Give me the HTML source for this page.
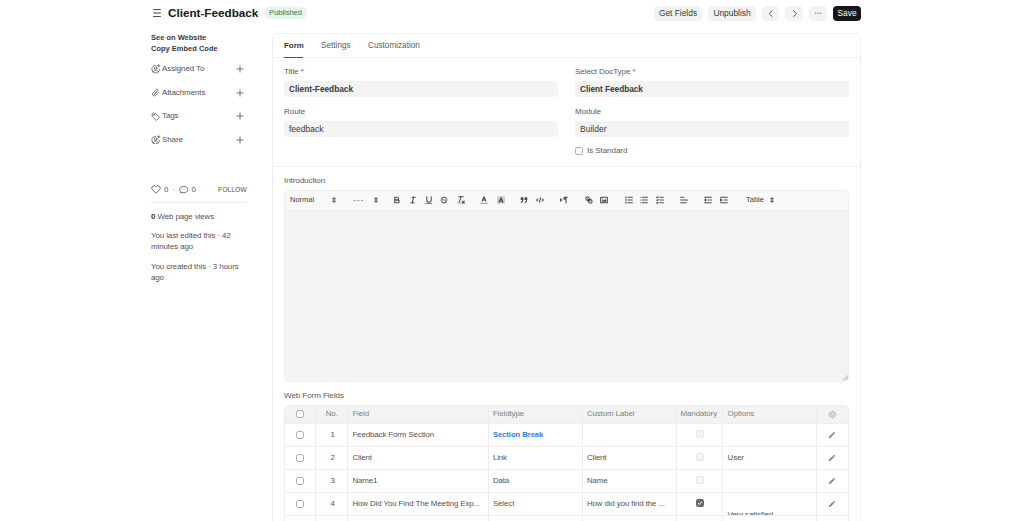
<!DOCTYPE html>
<html><head><meta charset="utf-8">
<style>
*{box-sizing:border-box;margin:0;padding:0}
html,body{width:1024px;height:521px;overflow:hidden;background:#fff}
body{font-family:"Liberation Sans",sans-serif;color:#383838;position:relative;font-size:7.7px}
.a{position:absolute;white-space:nowrap;line-height:1}
.btn{position:absolute;background:#f3f3f3;border-radius:4px;height:15px;top:6px;color:#383838;font-size:8.4px;line-height:15px;text-align:center}
.card{position:absolute;left:272px;top:33px;width:589px;height:500px;border:1px solid #efefef;border-radius:5px;background:#fff}
.lbl{position:absolute;color:#5a5a5a;font-size:8.1px;letter-spacing:-0.1px;line-height:1;white-space:nowrap;margin-top:-0.4px}
.req{color:#e03636}
.inp{position:absolute;background:#f3f3f3;border-radius:4px;height:16px;color:#383838;font-size:8.5px;line-height:16px;padding-left:5px;white-space:nowrap}
.hline{position:absolute;height:1px;background:#ededed}
.vline{position:absolute;width:1px;background:#ededed}
.cb{position:absolute;width:8px;height:8px;border:1px solid #a8a8a8;border-radius:2.5px;background:#fff}
.td{position:absolute;font-size:7.9px;letter-spacing:-0.1px;color:#525252;white-space:nowrap;line-height:1;margin-top:-0.4px}
.qi{position:absolute;top:195.2px}
.st{fill:none;stroke:#4a4a4a;stroke-width:1.9;stroke-linecap:round;stroke-linejoin:round}
.thin{stroke-width:1}
.fl{fill:#4a4a4a}
</style></head><body>

<!-- header -->
<svg class="a" style="left:148px;top:4px" width="20" height="18" viewBox="0 0 20 18" stroke="#4a4a4a" stroke-width="1"><path d="M5.2 5.5H12.8M5.2 9H12.8M5.2 12.5H12.8"/></svg>
<div class="a" style="left:168px;top:7px;font-size:11.7px;font-weight:bold;color:#171717">Client-Feedback</div>
<div class="a" style="left:264px;top:7px;width:43px;height:12px;border-radius:6px;background:#e4f5e9;color:#2b7d52;font-size:7.7px;letter-spacing:-0.1px;line-height:12px;text-align:center">Published</div>

<div class="btn" style="left:654px;width:48px">Get Fields</div>
<div class="btn" style="left:708px;width:48px">Unpublish</div>
<div class="btn" style="left:762px;width:17px"></div>
<div class="btn" style="left:785px;width:18px"></div>
<div class="btn" style="left:809px;width:18px"></div>
<svg class="a" style="left:767px;top:9px" width="8" height="9" viewBox="0 0 8 9" fill="none" stroke="#5a5a5a" stroke-width="1" stroke-linecap="round" stroke-linejoin="round"><path d="M5.2 1.7L2.2 4.6L5.2 7.5"/></svg>
<svg class="a" style="left:791px;top:9px" width="8" height="9" viewBox="0 0 8 9" fill="none" stroke="#5a5a5a" stroke-width="1" stroke-linecap="round" stroke-linejoin="round"><path d="M2.6 1.7L5.6 4.6L2.6 7.5"/></svg>
<svg class="a" style="left:814px;top:11px" width="8" height="4" viewBox="0 0 8 4" fill="#666"><circle cx="1.6" cy="2.2" r="0.65"/><circle cx="4" cy="2.2" r="0.65"/><circle cx="6.4" cy="2.2" r="0.65"/></svg>
<div class="btn" style="left:833px;width:28px;background:#171717;color:#fff">Save</div>

<!-- sidebar -->
<div class="a" style="left:151px;top:34px;font-size:7.5px;font-weight:bold;color:#383838">See on Website</div>
<div class="a" style="left:151px;top:45px;font-size:7.5px;font-weight:bold;color:#383838">Copy Embed Code</div>

<div class="a" style="left:162px;top:64.6px;font-size:8px;letter-spacing:-0.1px;color:#525252">Assigned To</div>
<div class="a" style="left:162px;top:88.6px;font-size:8px;letter-spacing:-0.1px;color:#525252">Attachments</div>
<div class="a" style="left:162px;top:112px;font-size:8px;letter-spacing:-0.1px;color:#525252">Tags</div>
<div class="a" style="left:162px;top:135.6px;font-size:8px;letter-spacing:-0.1px;color:#525252">Share</div>


<svg class="a" style="left:151px;top:64px" width="9.5" height="9.5" viewBox="0 0 16 16" fill="none" stroke="#505050" stroke-width="1.25" stroke-linecap="round"><path d="M14.2 8.8A6.4 6.4 0 1 1 7.6 2.3"/><circle cx="7.9" cy="6.9" r="2.2"/><path d="M3.6 13.2C4.6 11.4 6.1 10.4 7.9 10.4S11.2 11.4 12.2 13.2"/><path d="M13 1.2v3.6M11.2 3h3.6"/></svg>
<svg class="a" style="left:151px;top:87.5px" width="9.5" height="9.5" viewBox="0 0 16 16" fill="none" stroke="#505050" stroke-width="1.25" stroke-linecap="round"><path d="M6.2 9.8L11.3 4.7A1.6 1.6 0 0 0 9 2.4L3.3 8.1A3 3 0 0 0 7.6 12.4L13.4 6.6"/><path d="M5 11L10 6"/></svg>
<svg class="a" style="left:151px;top:112px" width="9.5" height="9.5" viewBox="0 0 16 16" fill="none" stroke="#505050" stroke-width="1.25" stroke-linejoin="round"><path d="M2 3.2A1.2 1.2 0 0 1 3.2 2H7.3L14.3 9L9 14.3L2 7.3Z"/><circle cx="5.2" cy="5.2" r="1"/></svg>
<svg class="a" style="left:151px;top:134.5px" width="9.5" height="9.5" viewBox="0 0 16 16" fill="none" stroke="#505050" stroke-width="1.25" stroke-linecap="round"><path d="M14.2 8.8A6.4 6.4 0 1 1 7.6 2.3"/><circle cx="7.9" cy="6.9" r="2.2"/><path d="M3.6 13.2C4.6 11.4 6.1 10.4 7.9 10.4S11.2 11.4 12.2 13.2"/><path d="M13 1.2v3.6M11.2 3h3.6"/></svg>
<svg class="a" style="left:236px;top:65px" width="8" height="8" viewBox="0 0 8 8" stroke="#525252" stroke-width="0.8"><path d="M4 0.5V7.5M0.5 4H7.5"/></svg>
<svg class="a" style="left:236px;top:88.5px" width="8" height="8" viewBox="0 0 8 8" stroke="#525252" stroke-width="0.8"><path d="M4 0.5V7.5M0.5 4H7.5"/></svg>
<svg class="a" style="left:236px;top:112px" width="8" height="8" viewBox="0 0 8 8" stroke="#525252" stroke-width="0.8"><path d="M4 0.5V7.5M0.5 4H7.5"/></svg>
<svg class="a" style="left:236px;top:135.5px" width="8" height="8" viewBox="0 0 8 8" stroke="#525252" stroke-width="0.8"><path d="M4 0.5V7.5M0.5 4H7.5"/></svg>

<svg class="a" style="left:151px;top:185px" width="10" height="9" viewBox="0 0 20 18" fill="none" stroke="#4a4a4a" stroke-width="1.6" stroke-linejoin="round"><path d="M10 16.5L2.6 9.3A4.4 4.4 0 0 1 10 3.3A4.4 4.4 0 0 1 17.4 9.3Z"/></svg>
<div class="a" style="left:164px;top:186px;font-size:8px;color:#525252">0</div>
<div class="a" style="left:172.5px;top:186px;font-size:8px;color:#666">·</div>
<svg class="a" style="left:178.5px;top:184.8px" width="9.5" height="9" viewBox="0 0 20 18" fill="none" stroke="#4a4a4a" stroke-width="1.6" stroke-linejoin="round"><path d="M4.5 14.5C2.5 13.3 1.5 11.3 1.5 9.2C1.5 5.3 5.3 2.5 10 2.5S18.5 5.3 18.5 9.2S14.7 15.8 10 15.8C8.8 15.8 7.6 15.6 6.5 15.2L3.8 16.8Z"/></svg>
<div class="a" style="left:191.5px;top:186px;font-size:8px;color:#525252">0</div>
<div class="a" style="left:218px;top:186.5px;font-size:6.8px;color:#525252">FOLLOW</div>
<div class="hline" style="left:151px;top:202px;width:96px"></div>
<div class="a" style="left:151px;top:212.6px;font-size:7.9px;letter-spacing:-0.08px;color:#525252"><b style="color:#383838">0</b> Web page views</div>
<div class="a" style="left:151px;top:230.3px;font-size:7.9px;letter-spacing:-0.08px;color:#525252;line-height:11px;white-space:normal;width:96px">You last edited this · 42 minutes ago</div>
<div class="a" style="left:151px;top:260.8px;font-size:7.9px;letter-spacing:-0.08px;color:#525252;line-height:11px;white-space:normal;width:96px">You created this · 3 hours ago</div>

<!-- card -->
<div class="card"></div>
<div class="a" style="left:284px;top:42px;font-size:7.9px;font-weight:bold;color:#383838">Form</div>
<div class="a" style="left:321px;top:42px;font-size:8.2px;color:#5c5c5c">Settings</div>
<div class="a" style="left:368px;top:42px;font-size:8.2px;color:#5c5c5c">Customization</div>
<div class="hline" style="left:273px;top:57px;width:587px;background:#efefef"></div>
<div class="a" style="left:284px;top:57px;width:19px;height:1px;background:#505050"></div>

<div class="lbl" style="left:284px;top:68px">Title <span class="req">*</span></div>
<div class="inp" style="left:284px;top:81px;width:274px;font-weight:bold;font-size:8.3px">Client-Feedback</div>
<div class="lbl" style="left:284px;top:108px">Route</div>
<div class="inp" style="left:284px;top:121px;width:274px">feedback</div>

<div class="lbl" style="left:575px;top:68px">Select DocType <span class="req">*</span></div>
<div class="inp" style="left:575px;top:81px;width:274px;font-weight:bold;font-size:8.3px;letter-spacing:-0.05px">Client Feedback</div>
<div class="lbl" style="left:575px;top:108px">Module</div>
<div class="inp" style="left:575px;top:121px;width:274px">Builder</div>
<div class="cb" style="left:575px;top:147px"></div>
<div class="lbl" style="left:587px;top:147px">Is Standard</div>

<div class="hline" style="left:273px;top:166px;width:587px;background:#efefef"></div>
<div class="lbl" style="left:284px;top:177px">Introduction</div>
<div class="a" style="left:284px;top:190px;width:565px;height:192px;border:1px solid #efefef;border-radius:5px;background:#f3f3f3;overflow:hidden">
  <div style="position:absolute;left:0;top:0;width:100%;height:20px;background:#f8f8f8;border-bottom:1px solid #ededed"></div>
</div>
<svg width="0" height="0" style="position:absolute">
<defs>
<symbol id="q-bold" viewBox="0 0 18 18"><path class="st" d="M5,4H9.5A2.5,2.5,0,0,1,12,6.5v0A2.5,2.5,0,0,1,9.5,9H5A0,0,0,0,1,5,9V4A0,0,0,0,1,5,4Z"/><path class="st" d="M5,9h5.5A2.5,2.5,0,0,1,13,11.5v0A2.5,2.5,0,0,1,10.5,14H5a0,0,0,0,1,0,0V9A0,0,0,0,1,5,9Z"/></symbol>
<symbol id="q-italic" viewBox="0 0 18 18"><line class="st" x1="7" x2="13" y1="4" y2="4"/><line class="st" x1="5" x2="11" y1="14" y2="14"/><line class="st" x1="8" x2="10" y1="14" y2="4"/></symbol>
<symbol id="q-underline" viewBox="0 0 18 18"><path class="st" d="M5,3V9a4.012,4.012,0,0,0,4,4H9a4.012,4.012,0,0,0,4-4V3"/><rect class="fl" height="1" rx="0.5" ry="0.5" width="12" x="3" y="15"/></symbol>
<symbol id="q-strike" viewBox="0 0 18 18"><line class="st thin" x1="15.5" x2="2.5" y1="8.5" y2="9.5"/><path class="fl" d="M9.007,8C6.542,7.791,6,7.519,6,6.5,6,5.792,7.283,5,9,5c1.571,0,2.765.679,2.969,1.309a1,1,0,0,0,1.9-.617C13.356,4.106,11.354,3,9,3,6.2,3,4,4.538,4,6.5a3.2,3.2,0,0,0,.5,1.843Z"/><path class="fl" d="M8.984,10C11.457,10.208,12,10.479,12,11.5c0,0.708-1.283,1.5-3,1.5-1.571,0-2.765-.679-2.969-1.309a1,1,0,1,0-1.9.617C4.644,13.894,6.646,15,9,15c2.8,0,5-1.538,5-3.5a3.2,3.2,0,0,0-.5-1.843Z"/></symbol>
<symbol id="q-clean" viewBox="0 0 18 18"><line class="st" x1="5" x2="13" y1="3" y2="3"/><line class="st" x1="6" x2="9.35" y1="12" y2="3"/><line class="st" x1="11" x2="15" y1="11" y2="15"/><line class="st" x1="15" x2="11" y1="11" y2="15"/><rect class="fl" height="1" rx="0.5" ry="0.5" width="7" x="2" y="14"/></symbol>
<symbol id="q-color" viewBox="0 0 18 18"><line class="st" style="stroke:#9a9a9a" x1="3" x2="15" y1="15" y2="15"/><polyline class="st" points="5.5 11 9 3 12.5 11"/><line class="st" x1="11.63" x2="6.38" y1="9" y2="9"/></symbol>
<symbol id="q-bg" viewBox="0 0 18 18"><rect x="2" y="2" width="14" height="14" fill="#cfcfcf"/><polyline class="st" points="5.5 13 9 5 12.5 13"/><line class="st" x1="11.63" x2="6.38" y1="11" y2="11"/></symbol>
<symbol id="q-quote" viewBox="0 0 18 18"><rect class="fl st" height="3" width="3" x="4" y="5"/><rect class="fl st" height="3" width="3" x="11" y="5"/><path class="fl st" d="M7,8c0,4.031-3,5-3,5"/><path class="fl st" d="M14,8c0,4.031-3,5-3,5"/></symbol>
<symbol id="q-code" viewBox="0 0 18 18"><polyline class="st" points="5 7 3 9 5 11"/><polyline class="st" points="13 7 15 9 13 11"/><line class="st" x1="10" x2="8" y1="5" y2="13"/></symbol>
<symbol id="q-dir" viewBox="0 0 18 18"><polygon class="st fl" points="3 11 5 9 3 7 3 11"/><line class="st fl" x1="15" x2="11" y1="4" y2="4"/><path class="fl" d="M11,3a3,3,0,0,0,0,6h1V3H11Z"/><rect class="fl" height="11" width="1" x="11" y="4"/><rect class="fl" height="11" width="1" x="13" y="4"/></symbol>
<symbol id="q-link" viewBox="0 0 18 18"><line class="st" x1="7" x2="11" y1="7" y2="11"/><path class="st" d="M8.9,4.577a3.476,3.476,0,0,1,.36,4.679A3.476,3.476,0,0,1,4.577,8.9C3.185,7.5,2.035,6.4,4.217,4.217S7.5,3.185,8.9,4.577Z"/><path class="st" d="M13.423,9.1a3.476,3.476,0,0,0-4.679-.36,3.476,3.476,0,0,0,.36,4.679c1.392,1.392,2.5,2.542,4.679.36S14.815,10.5,13.423,9.1Z"/></symbol>
<symbol id="q-image" viewBox="0 0 18 18"><rect class="st" height="10" width="12" x="3" y="4"/><circle class="fl" cx="6" cy="7" r="1"/><polyline class="fl" points="5 12 5 11 7 9 8 10 11 7 13 9 13 12 5 12"/></symbol>
<symbol id="q-ol" viewBox="0 0 18 18"><line class="st" x1="7" x2="15" y1="4" y2="4"/><line class="st" x1="7" x2="15" y1="9" y2="9"/><line class="st" x1="7" x2="15" y1="14" y2="14"/><line class="st thin" x1="2.5" x2="4.5" y1="5.5" y2="5.5"/><path class="fl" d="M3.5,6A0.5,0.5,0,0,1,3,5.5V3.085l-0.276.138A0.5,0.5,0,0,1,2.053,3c-0.124-.247-0.023-0.324.224-0.447l1-.5A0.5,0.5,0,0,1,4,2.5v3A0.5,0.5,0,0,1,3.5,6Z"/><path class="st thin" d="M4.5,10.5h-2c0-.234,1.85-1.076,1.85-2.234A0.959,0.959,0,0,0,2.5,8.156"/><path class="st thin" d="M2.5,14.846a0.959,0.959,0,0,0,1.850-.109A0.7,0.7,0,0,0,3.75,14a0.688,0.688,0,0,0,.6-0.736,0.959,0.959,0,0,0-1.85-.109"/></symbol>
<symbol id="q-ul" viewBox="0 0 18 18"><line class="st" x1="6" x2="15" y1="4" y2="4"/><line class="st" x1="6" x2="15" y1="9" y2="9"/><line class="st" x1="6" x2="15" y1="14" y2="14"/><line class="st" x1="3" x2="3" y1="4" y2="4"/><line class="st" x1="3" x2="3" y1="9" y2="9"/><line class="st" x1="3" x2="3" y1="14" y2="14"/></symbol>
<symbol id="q-check" viewBox="0 0 18 18"><line class="st" x1="9" x2="15" y1="4" y2="4"/><polyline class="st" points="3 4 4 5 6 3"/><line class="st" x1="9" x2="15" y1="14" y2="14"/><polyline class="st" points="3 14 4 15 6 13"/><line class="st" x1="9" x2="15" y1="9" y2="9"/><polyline class="st" points="3 9 4 10 6 8"/></symbol>
<symbol id="q-align" viewBox="0 0 18 18"><line class="st" x1="3" x2="15" y1="9" y2="9"/><line class="st" x1="3" x2="13" y1="14" y2="14"/><line class="st" x1="3" x2="9" y1="4" y2="4"/></symbol>
<symbol id="q-outdent" viewBox="0 0 18 18"><line class="st" x1="3" x2="15" y1="14" y2="14"/><line class="st" x1="3" x2="15" y1="4" y2="4"/><line class="st" x1="9" x2="15" y1="9" y2="9"/><polyline class="st" points="5 7 5 11 3 9 5 7"/></symbol>
<symbol id="q-indent" viewBox="0 0 18 18"><line class="st" x1="3" x2="15" y1="14" y2="14"/><line class="st" x1="3" x2="15" y1="4" y2="4"/><line class="st" x1="9" x2="15" y1="9" y2="9"/><polyline class="fl st" points="3 7 3 11 5 9 3 7"/></symbol>
<symbol id="q-arrows" viewBox="0 0 18 18"><polygon class="st fl" points="7 11 9 13 11 11 7 11"/><polygon class="st fl" points="7 7 9 5 11 7 7 7"/></symbol>
</defs></svg>
<svg class="qi" style="left:392px" width="10" height="10"><use href="#q-bold"/></svg>
<svg class="qi" style="left:407.9px" width="10" height="10"><use href="#q-italic"/></svg>
<svg class="qi" style="left:423.7px" width="10" height="10"><use href="#q-underline"/></svg>
<svg class="qi" style="left:439.3px" width="10" height="10"><use href="#q-strike"/></svg>
<svg class="qi" style="left:455.8px" width="10" height="10"><use href="#q-clean"/></svg>
<svg class="qi" style="left:479px" width="10" height="10"><use href="#q-color"/></svg>
<svg class="qi" style="left:495.5px" width="10" height="10"><use href="#q-bg"/></svg>
<svg class="qi" style="left:519.2px" width="10" height="10"><use href="#q-quote"/></svg>
<svg class="qi" style="left:534.9px" width="10" height="10"><use href="#q-code"/></svg>
<svg class="qi" style="left:559px" width="10" height="10"><use href="#q-dir"/></svg>
<svg class="qi" style="left:583.8px" width="10" height="10"><use href="#q-link"/></svg>
<svg class="qi" style="left:599.2px" width="10" height="10"><use href="#q-image"/></svg>
<svg class="qi" style="left:623.7px" width="10" height="10"><use href="#q-ol"/></svg>
<svg class="qi" style="left:639.2px" width="10" height="10"><use href="#q-ul"/></svg>
<svg class="qi" style="left:655.1px" width="10" height="10"><use href="#q-check"/></svg>
<svg class="qi" style="left:679.3px" width="10" height="10"><use href="#q-align"/></svg>
<svg class="qi" style="left:703.1px" width="10" height="10"><use href="#q-outdent"/></svg>
<svg class="qi" style="left:719.2px" width="10" height="10"><use href="#q-indent"/></svg>
<svg class="qi" style="left:329.1px" width="10" height="10"><use href="#q-arrows"/></svg>
<svg class="qi" style="left:370.5px" width="10" height="10"><use href="#q-arrows"/></svg>
<svg class="qi" style="left:767.1px" width="10" height="10"><use href="#q-arrows"/></svg>
<div class="a" style="left:290px;top:196px;font-size:7.5px;color:#444">Normal</div>
<div class="a" style="left:353.5px;top:196px;font-size:7.5px;color:#444;letter-spacing:1.1px">---</div>
<div class="a" style="left:746px;top:196px;font-size:7.5px;color:#444">Table</div>


<svg class="a" style="left:840px;top:372px" width="10" height="10" viewBox="0 0 10 10" stroke="#8c8c8c" stroke-width="0.75" stroke-linecap="round"><path d="M3.4 7.8L7.6 3.9M6.3 7.4L7.8 6"/></svg>
<div class="lbl" style="left:284px;top:392px">Web Form Fields</div>
<div class="a" style="left:284px;top:405px;width:565px;height:130px;border:1px solid #ededed;border-radius:5px;overflow:hidden;background:#fff">
<div style="position:absolute;left:0;top:0;width:100%;height:17px;background:#f3f3f3"></div>
<div style="position:absolute;left:30px;top:0;width:1px;height:130px;background:#ededed"></div>
<div style="position:absolute;left:62px;top:0;width:1px;height:130px;background:#ededed"></div>
<div style="position:absolute;left:203px;top:0;width:1px;height:130px;background:#ededed"></div>
<div style="position:absolute;left:297px;top:0;width:1px;height:130px;background:#ededed"></div>
<div style="position:absolute;left:391px;top:0;width:1px;height:130px;background:#ededed"></div>
<div style="position:absolute;left:437px;top:0;width:1px;height:130px;background:#ededed"></div>
<div style="position:absolute;left:531px;top:0;width:1px;height:130px;background:#ededed"></div>
<div style="position:absolute;left:0;top:17px;width:100%;height:1px;background:#ededed"></div>
<div style="position:absolute;left:0;top:40px;width:100%;height:1px;background:#ededed"></div>
<div style="position:absolute;left:0;top:63px;width:100%;height:1px;background:#ededed"></div>
<div style="position:absolute;left:0;top:86px;width:100%;height:1px;background:#ededed"></div>
<div style="position:absolute;left:0;top:109px;width:100%;height:1px;background:#ededed"></div>
</div>
<div class="td" style="left:325.7px;top:410px;color:#808080">No.</div>
<div class="td" style="left:352.4px;top:410px;color:#808080">Field</div>
<div class="td" style="left:492.9px;top:410px;color:#808080">Fieldtype</div>
<div class="td" style="left:586.9px;top:410px;color:#808080">Custom Label</div>
<div class="td" style="left:680.6px;top:410px;color:#808080">Mandatory</div>
<div class="td" style="left:727.6px;top:410px;color:#808080">Options</div>
<div class="cb" style="left:296px;top:410px"></div>
<svg class="a" style="left:828px;top:410.3px" width="9" height="9" viewBox="0 0 16 16" fill="none" stroke="#9c9c9c" stroke-width="1.3"><circle cx="8" cy="8" r="5.2"/><circle cx="8" cy="8" r="2"/><path d="M8 1.2V2.8M8 13.2V14.8M1.2 8H2.8M13.2 8H14.8M3.2 3.2L4.3 4.3M11.7 11.7L12.8 12.8M3.2 12.8L4.3 11.7M11.7 4.3L12.8 3.2"/></svg>
<div class="cb" style="left:296px;top:430.5px"></div>
<div class="td" style="left:330.4px;top:431px">1</div>
<div class="td" style="left:352.4px;top:431px">Feedback Form Section</div>
<div class="td" style="left:492.9px;top:431px;color:#2b7be0;font-weight:bold;font-size:7.55px;letter-spacing:0px">Section Break</div>
<div style="position:absolute;left:695.5px;top:430px;width:8px;height:8px;border-radius:2px;border:1px solid #e6e6e6;background:#f5f5f5"></div>
<svg class="a" style="left:828px;top:431.0px" width="8" height="8" viewBox="0 0 16 16"><path d="M1.5 14.5L2.3 11L10.8 2.5Q12 1.3 13.2 2.5L13.5 2.8Q14.7 4 13.5 5.2L5 13.7Z" fill="#858585"/><path d="M9.5 3.8L12.2 6.5" stroke="#fff" stroke-width="1.1"/></svg>
<div class="cb" style="left:296px;top:453.5px"></div>
<div class="td" style="left:330.4px;top:454px">2</div>
<div class="td" style="left:352.4px;top:454px">Client</div>
<div class="td" style="left:492.9px;top:454px">Link</div>
<div class="td" style="left:586.9px;top:454px">Client</div>
<div style="position:absolute;left:695.5px;top:453px;width:8px;height:8px;border-radius:2px;border:1px solid #e6e6e6;background:#f5f5f5"></div>
<div class="td" style="left:727.6px;top:454px">User</div>
<svg class="a" style="left:828px;top:454.0px" width="8" height="8" viewBox="0 0 16 16"><path d="M1.5 14.5L2.3 11L10.8 2.5Q12 1.3 13.2 2.5L13.5 2.8Q14.7 4 13.5 5.2L5 13.7Z" fill="#858585"/><path d="M9.5 3.8L12.2 6.5" stroke="#fff" stroke-width="1.1"/></svg>
<div class="cb" style="left:296px;top:476.5px"></div>
<div class="td" style="left:330.4px;top:477px">3</div>
<div class="td" style="left:352.4px;top:477px">Name1</div>
<div class="td" style="left:492.9px;top:477px">Data</div>
<div class="td" style="left:586.9px;top:477px">Name</div>
<div style="position:absolute;left:695.5px;top:476px;width:8px;height:8px;border-radius:2px;border:1px solid #e6e6e6;background:#f5f5f5"></div>
<svg class="a" style="left:828px;top:477.0px" width="8" height="8" viewBox="0 0 16 16"><path d="M1.5 14.5L2.3 11L10.8 2.5Q12 1.3 13.2 2.5L13.5 2.8Q14.7 4 13.5 5.2L5 13.7Z" fill="#858585"/><path d="M9.5 3.8L12.2 6.5" stroke="#fff" stroke-width="1.1"/></svg>
<div class="cb" style="left:296px;top:499.5px"></div>
<div class="td" style="left:330.4px;top:500px">4</div>
<div class="td" style="left:352.4px;top:500px">How Did You Find The Meeting Exp...</div>
<div class="td" style="left:492.9px;top:500px">Select</div>
<div class="td" style="left:586.9px;top:500px">How did you find the ...</div>
<div style="position:absolute;left:695.5px;top:499px;width:8px;height:8px;border-radius:2px;background:#6b6b6b"><svg width="8" height="8" viewBox="0 0 8 8" style="position:absolute;left:0;top:0"><path d="M2 4.2L3.4 5.5L6 2.6" fill="none" stroke="#fff" stroke-width="1"/></svg></div>
<svg class="a" style="left:828px;top:500.0px" width="8" height="8" viewBox="0 0 16 16"><path d="M1.5 14.5L2.3 11L10.8 2.5Q12 1.3 13.2 2.5L13.5 2.8Q14.7 4 13.5 5.2L5 13.7Z" fill="#858585"/><path d="M9.5 3.8L12.2 6.5" stroke="#fff" stroke-width="1.1"/></svg>
<div style="position:absolute;left:723px;top:493px;width:93px;height:22px;overflow:hidden"><div class="td" style="left:4.6px;top:18px">Very satisfied</div></div>
</body></html>
